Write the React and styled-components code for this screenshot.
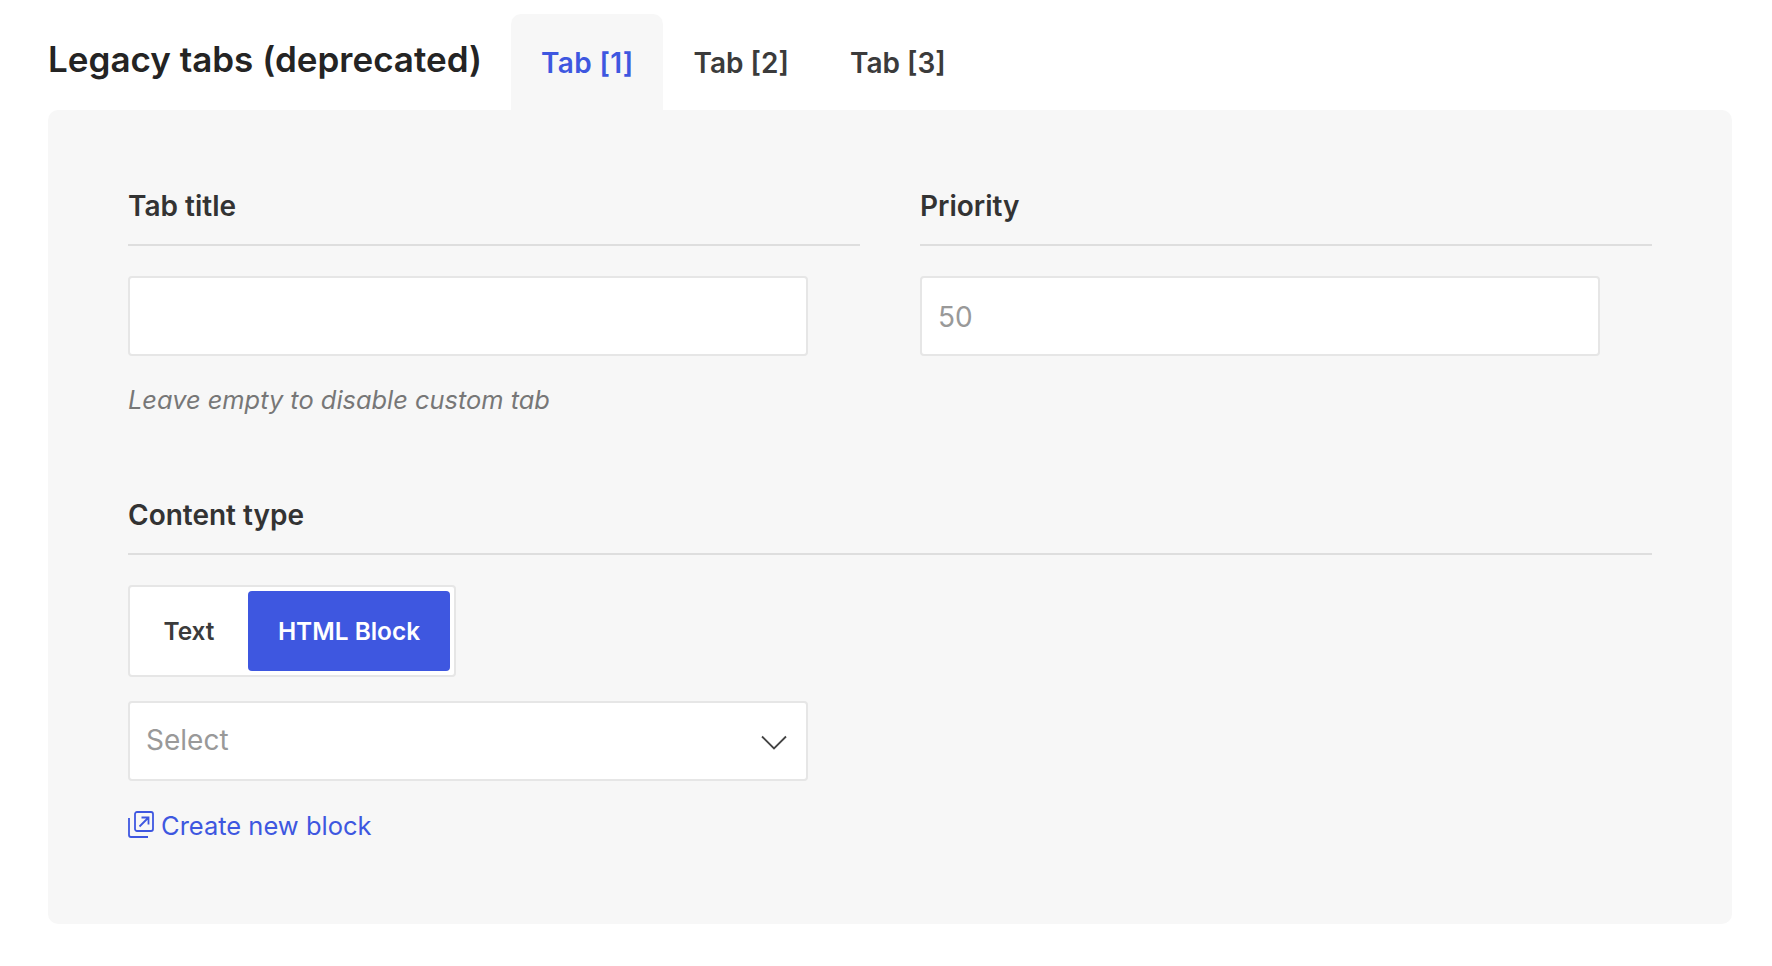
import React, { useState } from 'react';
import styled, { createGlobalStyle } from 'styled-components';

const GlobalStyle = createGlobalStyle`
  html, body {
    margin: 0;
    background: #fff;
    font-family: Inter, "Noto Sans", sans-serif;
    color: #333;
  }
  * { box-sizing: border-box; }
`;

const Page = styled.div`
  padding: 14px 40px 0 48px;
`;

const TabBar = styled.div`
  display: flex;
  align-items: stretch;
  height: 96px;
`;

const Heading = styled.h2`
  margin: 0 29px 0 0;
  padding-top: 21px;
  font-size: 35px;
  line-height: 48px;
  font-weight: 600;
  color: #242424;
`;

const Tab = styled.a`
  display: flex;
  align-items: center;
  padding: 2px 30px 0;
  margin-right: 1px;
  border-radius: 10px 10px 0 0;
  font-size: 28px;
  font-weight: 600;
  cursor: pointer;
  letter-spacing: ${(p) => (p.$active ? '0.35px' : '0')};
  padding-right: ${(p) => (p.$active ? '29px' : '30px')};
  color: ${(p) => (p.$active ? '#3e57e0' : '#3b3b3b')};
  background: ${(p) => (p.$active ? '#f7f7f7' : 'transparent')};
`;

const Panel = styled.div`
  height: 814px;
  padding: 58px 80px 0;
  background: #f7f7f7;
  border-radius: 10px;
`;

const FieldRow = styled.div`
  display: grid;
  grid-template-columns: 732px 732px;
  gap: 60px;
  margin-bottom: 59px;
`;

const Field = styled.div``;

const Label = styled.div`
  height: 78px;
  padding-bottom: 18px;
  margin-bottom: 30px;
  display: flex;
  align-items: flex-end;
  font-size: 28px;
  line-height: 40px;
  font-weight: 600;
  color: #333;
  border-bottom: 2px solid #dedede;
`;

const TextInput = styled.input`
  display: block;
  width: 680px;
  height: 80px;
  padding: 2px 16px 0;
  background: #fff;
  border: 2px solid #e6e6e6;
  border-radius: 4px;
  font: 400 28px Inter, sans-serif;
  color: #333;
  outline: none;
  &::placeholder { color: #999; }
`;

const Hint = styled.p`
  margin: 26px 0 0;
  font-size: 25.4px;
  line-height: 36px;
  font-style: italic;
  color: #777;
`;

const Segment = styled.div`
  display: inline-flex;
  vertical-align: top;
  padding: 4px;
  background: #fff;
  border: 2px solid #e6e6e6;
  border-radius: 4px;
`;

const SegmentButton = styled.button`
  width: ${(p) => p.$width}px;
  height: 80px;
  padding: 0 ${(p) => p.$inset || 0}px 0 0;
  border: 0;
  border-radius: 4px;
  font: 600 24.4px Inter, sans-serif;
  cursor: pointer;
  color: ${(p) => (p.$active ? '#fff' : '#3b3b3b')};
  background: ${(p) => (p.$active ? '#3e57e0' : 'transparent')};
`;

const SelectBox = styled.div`
  display: flex;
  align-items: center;
  justify-content: space-between;
  width: 680px;
  height: 80px;
  margin-top: 24px;
  padding: 0 19px 2px 16px;
  background: #fff;
  border: 2px solid #e6e6e6;
  border-radius: 4px;
  font-size: 28px;
  color: #999;
`;

const ChevronIcon = styled.svg`
  margin-top: 6px;
`;

const CreateLink = styled.a`
  display: inline-flex;
  align-items: center;
  gap: 7px;
  margin-top: 25px;
  font-size: 25.5px;
  line-height: 40px;
  color: #3e57e0;
  cursor: pointer;
`;

const BlockIcon = styled.svg`
  margin-top: -3px;
`;

const Chevron = () => (
  <ChevronIcon width="26" height="16" viewBox="0 0 26 16" fill="none" stroke="#444" strokeWidth="1.8">
    <path d="M1 1.5 L13 13.5 L25 1.5" />
  </ChevronIcon>
);

const NewBlockIcon = () => (
  <BlockIcon width="26" height="27" viewBox="0 0 26 27" fill="none" stroke="#3e57e0" strokeWidth="1.8">
    <rect x="7" y="1" width="18" height="19" rx="2" />
    <path d="M1 7 V24 a2 2 0 0 0 2 2 H20" />
    <path d="M11.5 15.5 L20 7 M13.5 6.5 H20.5 V13.5" />
  </BlockIcon>
);

export default function App() {
  const [contentType, setContentType] = useState('html');
  const [activeTab, setActiveTab] = useState(1);

  return (
    <Page>
      <GlobalStyle />
      <TabBar>
        <Heading>Legacy tabs (deprecated)</Heading>
        {[1, 2, 3].map((n) => (
          <Tab key={n} $active={activeTab === n} onClick={() => setActiveTab(n)}>
            Tab [{n}]
          </Tab>
        ))}
      </TabBar>
      <Panel>
        <FieldRow>
          <Field>
            <Label>Tab title</Label>
            <TextInput />
            <Hint>Leave empty to disable custom tab</Hint>
          </Field>
          <Field>
            <Label>Priority</Label>
            <TextInput placeholder="50" />
          </Field>
        </FieldRow>
        <Field>
          <Label>Content type</Label>
          <Segment>
            <SegmentButton $width={114} $inset={4} $active={contentType === 'text'} onClick={() => setContentType('text')}>
              Text
            </SegmentButton>
            <SegmentButton $width={202} $active={contentType === 'html'} onClick={() => setContentType('html')}>
              HTML Block
            </SegmentButton>
          </Segment>
          <SelectBox>
            Select
            <Chevron />
          </SelectBox>
          <CreateLink>
            <NewBlockIcon />
            Create new block
          </CreateLink>
        </Field>
      </Panel>
    </Page>
  );
}
